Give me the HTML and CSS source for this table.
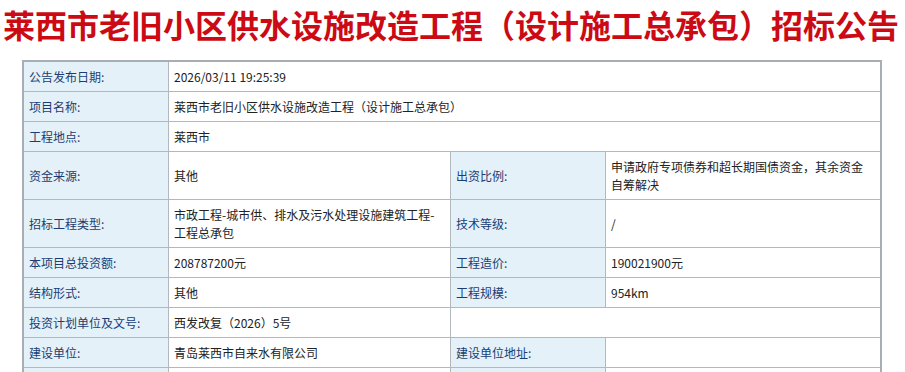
FILE: index.html
```html
<!DOCTYPE html>
<html lang="zh-CN">
<head>
<meta charset="utf-8">
<title>莱西市老旧小区供水设施改造工程（设计施工总承包）招标公告</title>
<link rel="stylesheet" href="styles.css">
</head>
<body>
<h1 class="title">莱西市老旧小区供水设施改造工程（设计施工总承包）招标公告</h1>
<table class="info">
  <colgroup>
    <col class="c1"><col class="c2"><col class="c3"><col class="c4">
  </colgroup>
  <tbody>
    <tr>
      <td class="lbl">公告发布日期:</td>
      <td class="val last" colspan="3">2026/03/11 19:25:39</td>
    </tr>
    <tr>
      <td class="lbl">项目名称:</td>
      <td class="val last" colspan="3">莱西市老旧小区供水设施改造工程（设计施工总承包）</td>
    </tr>
    <tr>
      <td class="lbl">工程地点:</td>
      <td class="val last" colspan="3">莱西市</td>
    </tr>
    <tr>
      <td class="lbl">资金来源:</td>
      <td class="val">其他</td>
      <td class="lbl">出资比例:</td>
      <td class="val last">申请政府专项债券和超长期国债资金，其余资金自筹解决</td>
    </tr>
    <tr>
      <td class="lbl">招标工程类型:</td>
      <td class="val">市政工程-城市供、排水及污水处理设施建筑工程-工程总承包</td>
      <td class="lbl">技术等级:</td>
      <td class="val last">/</td>
    </tr>
    <tr>
      <td class="lbl">本项目总投资额:</td>
      <td class="val">208787200元</td>
      <td class="lbl">工程造价:</td>
      <td class="val last">190021900元</td>
    </tr>
    <tr>
      <td class="lbl">结构形式:</td>
      <td class="val">其他</td>
      <td class="lbl">工程规模:</td>
      <td class="val last">954km</td>
    </tr>
    <tr>
      <td class="lbl">投资计划单位及文号:</td>
      <td class="val">西发改复（2026）5号</td>
      <td class="val last" colspan="2"></td>
    </tr>
    <tr>
      <td class="lbl">建设单位:</td>
      <td class="val">青岛莱西市自来水有限公司</td>
      <td class="lbl">建设单位地址:</td>
      <td class="val last"></td>
    </tr>
    <tr class="tail">
      <td class="lbl"></td>
      <td class="val"></td>
      <td class="lbl"></td>
      <td class="val last"></td>
    </tr>
  </tbody>
</table>
</body>
</html>
```

FILE: styles.css
```css
html, body {
  margin: 0;
  padding: 0;
  background: #ffffff;
}

body {
  font-family: "Noto Sans CJK SC", "Noto Sans", sans-serif;
}

.title {
  margin: 6px 0 0 3px;
  font-size: 32px;
  line-height: 36px;
  font-weight: bold;
  color: #cc0a14;
  white-space: nowrap;
  letter-spacing: 0;
}

.info {
  margin: 18px 0 0 22px;
  width: 860px;
  table-layout: fixed;
  border-collapse: separate;
  border-spacing: 0;
  border: 2px solid #a9aeb5;
  font-size: 12px;
  line-height: 18px;
}

.c1 { width: 145px; }
.c2 { width: 282px; }
.c3 { width: 155px; }
.c4 { width: 274px; }

.info td {
  padding: 6px 8px 5px 5px;
  border-right: 1px solid #b3b8bf;
  border-bottom: 1px solid #b3b8bf;
  vertical-align: middle;
  text-align: left;
  word-break: break-all;
}

.info td.last {
  border-right: none;
}

.tail td {
  height: 18px;
}

.lbl {
  background: #e4f1f8;
  color: #1b3d74;
}

.val {
  background: #ffffff;
  color: #222222;
}
```
